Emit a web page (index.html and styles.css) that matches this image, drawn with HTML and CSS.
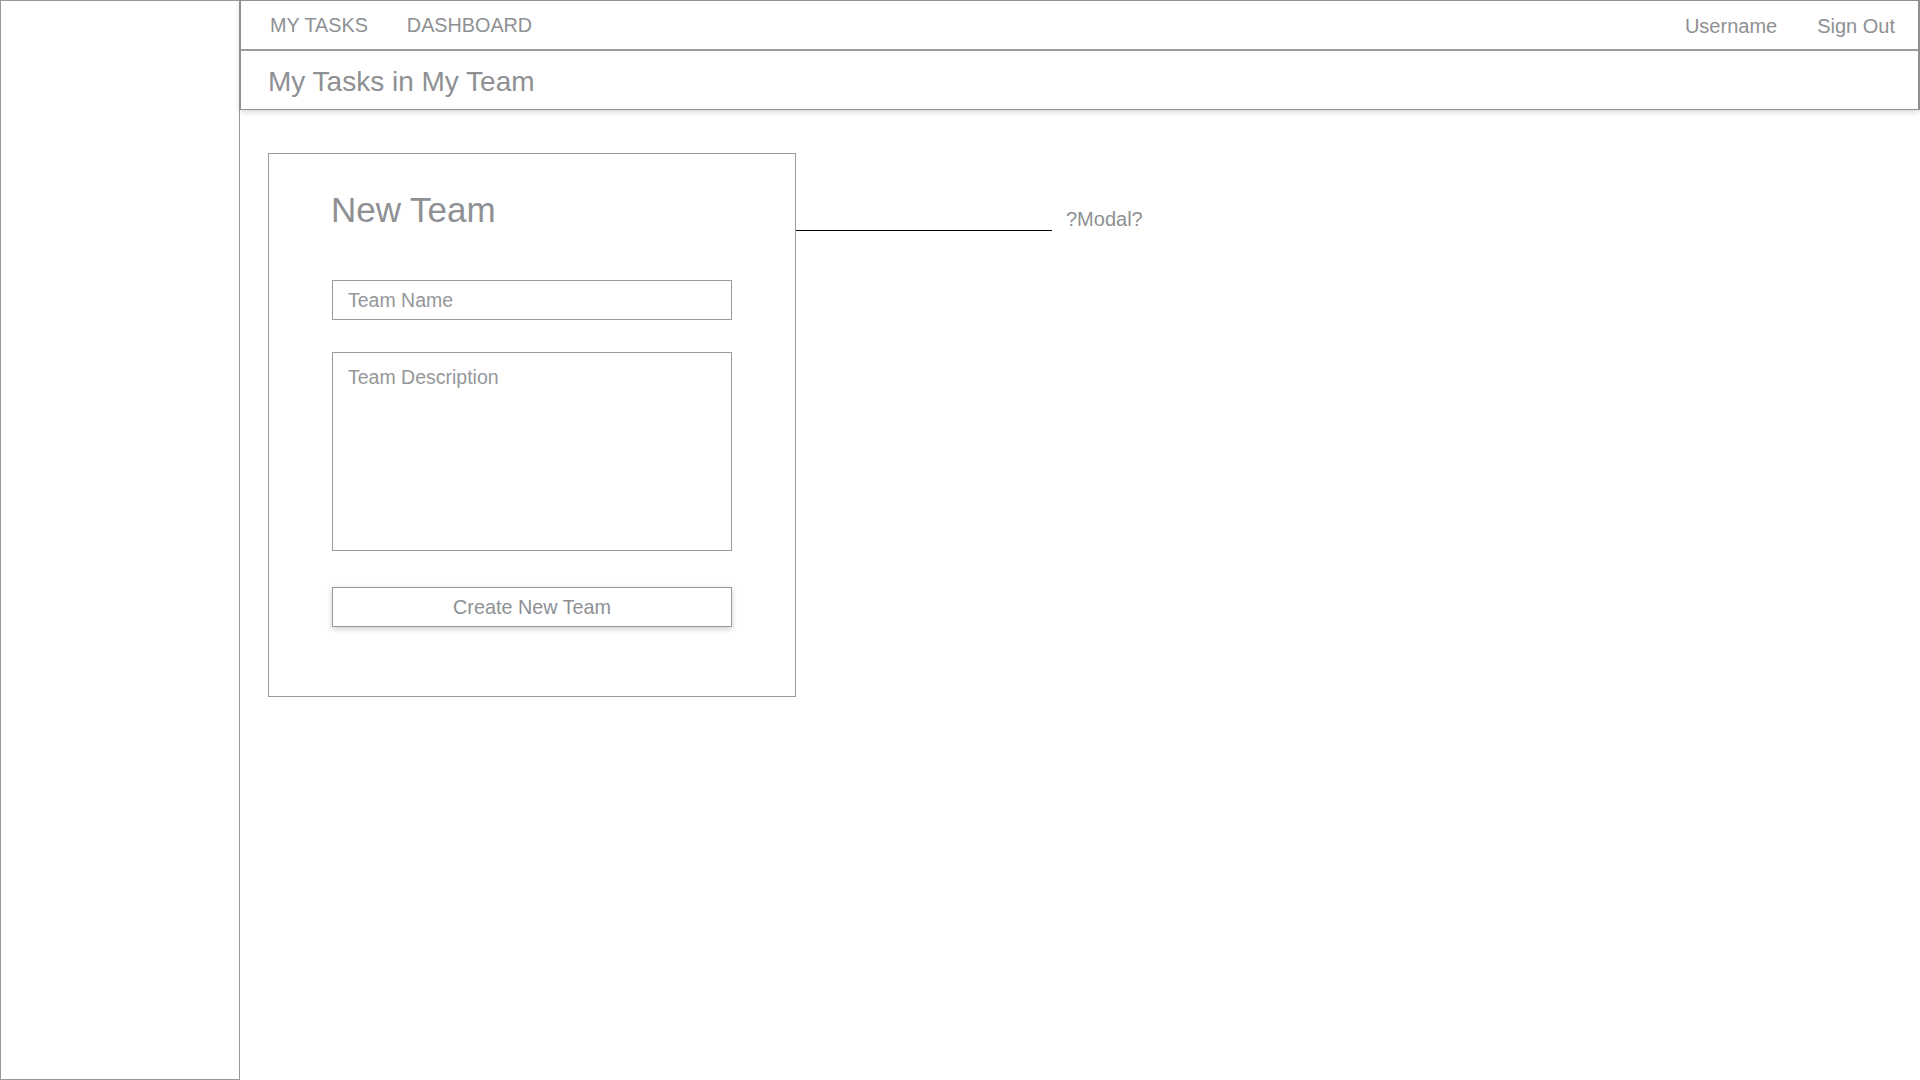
FILE: index.html
```html
<!DOCTYPE html>
<html lang="en">
<head>
<meta charset="utf-8">
<title>My Tasks in My Team</title>
<link rel="stylesheet" href="styles.css">
</head>
<body>
<div class="app">
  <aside class="sidebar"></aside>
  <main class="main">
    <header class="header">
      <nav class="nav">
        <div class="nav-left">
          <a class="nav-link">MY TASKS</a>
          <a class="nav-link">DASHBOARD</a>
        </div>
        <div class="nav-right">
          <a class="nav-user">Username</a>
          <a class="nav-user">Sign Out</a>
        </div>
      </nav>
      <div class="title-bar">
        <h1 class="page-title">My Tasks in My Team</h1>
      </div>
    </header>
    <section class="content">
      <div class="card">
        <h2 class="card-title">New Team</h2>
        <input class="field" type="text" placeholder="Team Name">
        <textarea class="field area" placeholder="Team Description"></textarea>
        <button class="btn" type="button">Create New Team</button>
      </div>
      <div class="note">
        <span class="note-line"></span>
        <span class="note-text">?Modal?</span>
      </div>
    </section>
  </main>
</div>
</body>
</html>
```
FILE: styles.css
```css
* { box-sizing: border-box; }
html, body { margin: 0; padding: 0; background: #fff; }
body {
  font-family: "Liberation Sans", Arial, Helvetica, sans-serif;
  color: #8e9093;
}
.app {
  display: flex;
  width: 1920px;
  height: 1080px;
  overflow: hidden;
}
.sidebar {
  width: 240px;
  flex: 0 0 240px;
  height: 1080px;
  border: 1px solid #98999b;
}
.main {
  flex: 1;
  display: flex;
  flex-direction: column;
}
.header {
  border: 1px solid #8f9092;
  border-right-width: 2px;
  box-shadow: 0 2px 6px rgba(0, 0, 0, 0.16);
  background: #fff;
}
.nav {
  height: 50px;
  border-bottom: 2px solid #9a9b9d;
  display: flex;
  justify-content: space-between;
  padding: 0 23px 0 29px;
}
.nav-left {
  display: flex;
  gap: 39px;
  padding-top: 12px;
}
.nav-link {
  font-size: 19.8px;
  line-height: 24px;
  color: #8e9093;
}
.nav-right {
  display: flex;
  gap: 40px;
  padding-top: 13px;
}
.nav-user {
  font-size: 20px;
  line-height: 24px;
  color: #8e9093;
}
.title-bar {
  padding: 15px 0 11px 27px;
}
.page-title {
  margin: 0;
  font-size: 28px;
  line-height: 32px;
  font-weight: normal;
  color: #8e9093;
}
.content {
  display: flex;
  align-items: flex-start;
  padding: 43px 0 0 28px;
}
.card {
  width: 528px;
  border: 1px solid #9a9a9a;
  padding: 0 63px 69px 62px;
  display: flex;
  flex-direction: column;
}
.card-title {
  margin: 36px 0 50px 0;
  font-size: 35px;
  line-height: 40px;
  font-weight: normal;
  color: #8e9093;
}
.field {
  display: block;
  width: 400px;
  height: 40px;
  margin: 0 0 0 1px;
  border: 1px solid #9a9a9a;
  border-radius: 0;
  background: #fff;
  font-family: "Liberation Sans", Arial, Helvetica, sans-serif;
  font-size: 19.5px;
  color: #8e9093;
  padding: 0 15px;
  outline: none;
}
.field::placeholder { color: #95979a; opacity: 1; }
.area {
  height: 199px;
  margin-top: 32px;
  padding: 13px 15px;
  line-height: 22px;
  resize: none;
}
.btn {
  display: block;
  width: 400px;
  height: 40px;
  margin: 36px 0 0 1px;
  border: 1px solid #9a9a9a;
  border-radius: 0;
  background: #fff;
  box-shadow: 0 2px 6px rgba(0, 0, 0, 0.2);
  font-family: "Liberation Sans", Arial, Helvetica, sans-serif;
  font-size: 19.8px;
  color: #8e9093;
  padding: 0;
}
.note {
  display: flex;
  align-items: flex-end;
  margin-top: 54px;
  gap: 14px;
}
.note-line {
  display: block;
  width: 256px;
  height: 1px;
  background: #000;
}
.note-text {
  font-size: 20px;
  line-height: 24px;
  color: #8e9093;
}
```
